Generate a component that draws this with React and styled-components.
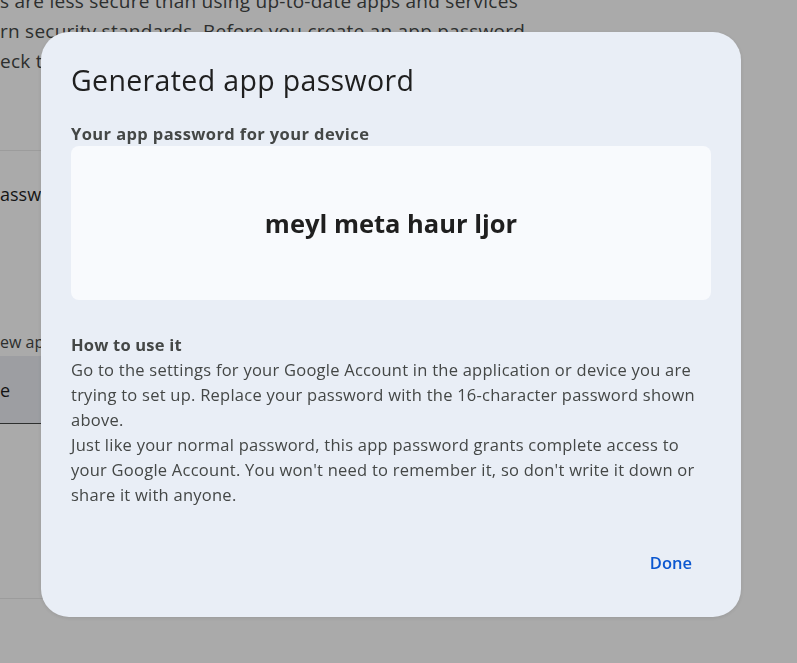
import React from 'react';
import styled, { createGlobalStyle } from 'styled-components';

const GlobalStyle = createGlobalStyle`
  html, body {
    margin: 0;
    padding: 0;
    background: #ffffff;
    font-family: "Open Sans", Roboto, Arial, sans-serif;
    overflow: hidden;
  }
`;

const Page = styled.div`
  width: 700px;
  height: 663px;
  overflow: hidden;
  color: #1f1f1f;
`;

const Intro = styled.p`
  margin: -14px 0 0;
  font-size: 19px;
  line-height: 30px;
  letter-spacing: 0.25px;
  color: #444746;
  white-space: pre;
`;

const Divider = styled.div`
  height: 1px;
  background: #ebebeb;
  margin-top: ${({ top }) => top}px;
`;

const SectionTitle = styled.div`
  margin-top: 31px;
  font-size: 18px;
  line-height: 24px;
  font-weight: 500;
  color: #1f1f1f;
`;

const FieldLabel = styled.div`
  margin-top: 124px;
  font-size: 16px;
  line-height: 24px;
  color: #444746;
`;

const Field = styled.div`
  height: 67px;
  background: #eceef4;
  border-bottom: 1px solid #444746;
  display: flex;
  align-items: center;
  font-size: 18px;
  color: #1f1f1f;
  margin-top: 2px;
`;

const Overlay = styled.div`
  position: fixed;
  inset: 0;
  background: rgba(0, 0, 0, 0.335);
  display: flex;
  align-items: flex-start;
  padding: 32px 0 0 41px;
`;

const Dialog = styled.div`
  width: 700px;
  height: 585px;
  box-sizing: border-box;
  background: #e9eef6;
  border-radius: 28px;
  padding: 26px 30px 35px;
  display: flex;
  flex-direction: column;
  box-shadow: 0 1px 4px rgba(0, 0, 0, 0.1);
`;

const Title = styled.h2`
  margin: 0;
  font-size: 28.5px;
  line-height: 44px;
  font-weight: 400;
  letter-spacing: 0.35px;
  color: #1f1f1f;
`;

const Label = styled.div`
  margin-top: ${({ gap }) => gap}px;
  font-size: 16.5px;
  line-height: 24px;
  font-weight: 700;
  letter-spacing: ${({ spread }) => spread}px;
  color: #444746;
`;

const PasswordBox = styled.div`
  margin-top: 0;
  height: 154px;
  background: #f8fafd;
  border-radius: 8px;
  display: flex;
  align-items: center;
  justify-content: center;
  font-size: 25.5px;
  font-weight: 700;
  color: #1f1f1f;
`;

const Body = styled.div`
  font-size: 16.5px;
  line-height: 25px;
  letter-spacing: 0.25px;
  color: #444746;
  white-space: nowrap;
`;

const Actions = styled.div`
  margin-top: auto;
  display: flex;
  justify-content: flex-end;
  padding-right: 7px;
`;

const TextButton = styled.button`
  border: none;
  background: transparent;
  height: 40px;
  padding: 0 12px;
  font-family: inherit;
  font-size: 16.5px;
  font-weight: 600;
  color: #0b57d0;
  cursor: pointer;
`;

export default function App() {
  return (
    <Page>
      <GlobalStyle />
      <Intro>
        {'s are less secure than using up-to-date apps and services\nrn security standards. Before you create an app password\neck to see if your app needs this in order to connect.'}
      </Intro>
      <Divider top={74} />
      <SectionTitle>asswords</SectionTitle>
      <FieldLabel>ew app name</FieldLabel>
      <Field>e</Field>
      <Divider top={174} />

      <Overlay>
        <Dialog>
          <Title>Generated app password</Title>
          <Label gap={20} spread={0.4}>Your app password for your device</Label>
          <PasswordBox>meyl meta haur ljor</PasswordBox>
          <Label gap={33} spread={0.2}>How to use it</Label>
          <Body>
            Go to the settings for your Google Account in the application or device you are
            <br />
            trying to set up. Replace your password with the 16-character password shown
            <br />
            above.
            <br />
            Just like your normal password, this app password grants complete access to
            <br />
            your Google Account. You won't need to remember it, so don't write it down or
            <br />
            share it with anyone.
          </Body>
          <Actions>
            <TextButton>Done</TextButton>
          </Actions>
        </Dialog>
      </Overlay>
    </Page>
  );
}
